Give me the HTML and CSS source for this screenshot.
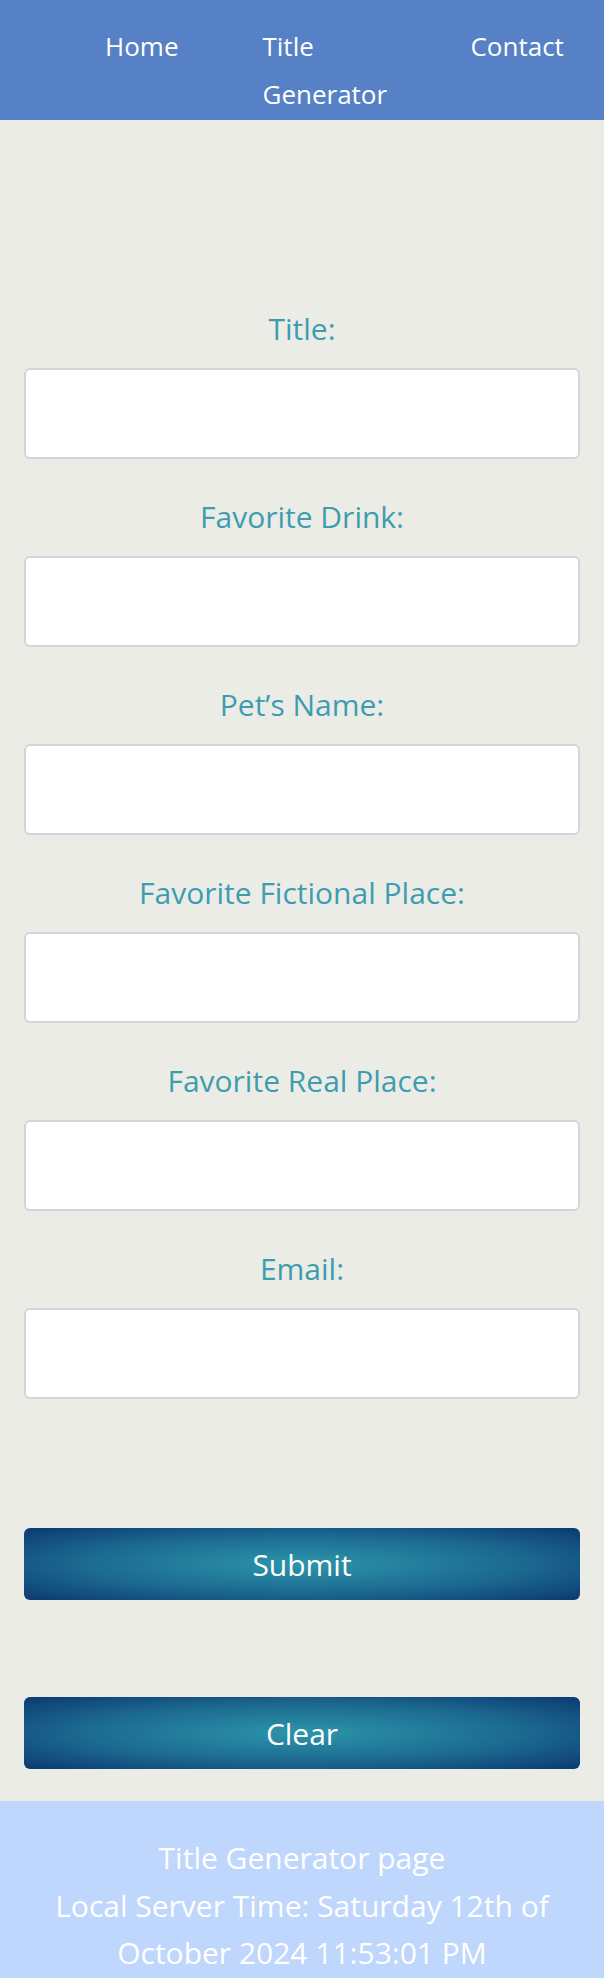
FILE: index.html
```html
<!DOCTYPE html>
<html lang="en">
<head>
<meta charset="utf-8">
<title>Title Generator</title>
<link rel="stylesheet" href="styles.css">
</head>
<body>
<header class="site-header">
  <nav class="nav">
    <a class="nav-link nav-home" href="#">Home</a>
    <a class="nav-link nav-title" href="#">Title Generator</a>
    <a class="nav-link nav-contact" href="#">Contact</a>
  </nav>
</header>
<main class="main">
  <form class="form">
    <div class="field">
      <label class="label" for="title">Title:</label>
      <input class="input" id="title" type="text">
    </div>
    <div class="field">
      <label class="label" for="drink">Favorite Drink:</label>
      <input class="input" id="drink" type="text">
    </div>
    <div class="field">
      <label class="label" for="pet">Pet’s Name:</label>
      <input class="input" id="pet" type="text">
    </div>
    <div class="field">
      <label class="label" for="fict">Favorite Fictional Place:</label>
      <input class="input" id="fict" type="text">
    </div>
    <div class="field">
      <label class="label" for="real">Favorite Real Place:</label>
      <input class="input" id="real" type="text">
    </div>
    <div class="field">
      <label class="label" for="email">Email:</label>
      <input class="input" id="email" type="email">
    </div>
    <div class="actions">
      <button class="btn" type="button">Submit</button>
      <button class="btn" type="button">Clear</button>
    </div>
  </form>
</main>
<footer class="footer">
  <p class="footer-text">Title Generator page<br>Local Server Time: Saturday 12th of October 2024 11:53:01 PM</p>
</footer>
</body>
</html>
```
FILE: styles.css
```css
* { box-sizing: border-box; }
html, body { margin: 0; padding: 0; }
body {
  background: #ecece6;
  font-family: "Open Sans", "Noto Sans", sans-serif;
  font-size: 30px;
}
.site-header {
  background: #5681c6;
  height: 120px;
  padding-top: 22px;
  font-size: 26px;
}
.nav {
  display: flex;
  align-items: flex-start;
  gap: 84px;
  padding-left: 105px;
}
.nav-link {
  color: #ffffff;
  text-decoration: none;
  line-height: 48px;
}
.nav-title { width: 124px; }
.main { padding: 185px 24px 32px; }
.form { display: flex; flex-direction: column; }
.field {
  display: flex;
  flex-direction: column;
  margin-bottom: 34px;
}
.label {
  color: #3d9db0;
  text-align: center;
  line-height: 47px;
  margin-bottom: 16px;
}
.input {
  height: 91px;
  width: 100%;
  background: #ffffff;
  border: 2px solid #d2d6dc;
  border-radius: 6px;
  font: inherit;
}
.actions {
  display: flex;
  flex-direction: column;
  gap: 97px;
  margin-top: 95px;
}
.btn {
  height: 72px;
  width: 100%;
  border: none;
  border-radius: 6px;
  color: #ffffff;
  font: inherit;
  background: radial-gradient(ellipse at center, #2c95aa 0%, #1c6a91 55%, #0b3a70 100%);
}
.footer {
  background: #bfd6fd;
  padding: 33px 24px;
}
.footer-text {
  margin: 0;
  color: #ffffff;
  text-align: center;
  line-height: 47.5px;
}
```
